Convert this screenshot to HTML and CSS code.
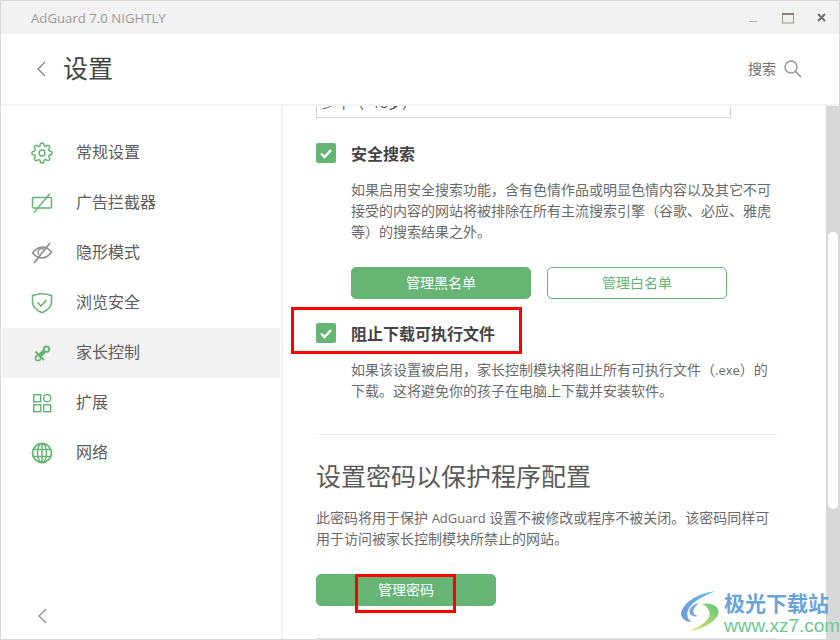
FILE: index.html
```html
<!DOCTYPE html>
<html lang="zh-CN">
<head>
<meta charset="utf-8">
<title>AdGuard 设置</title>
<link rel="stylesheet" href="styles.css">
</head>
<body>
<div class="window">
  <div class="titlebar">
    <span class="app-name">AdGuard 7.0 NIGHTLY</span>
    <div class="win-controls">
      <svg class="win-icon" width="14" height="14" viewBox="0 0 14 14"><path d="M2 10.500h8" stroke="#b5b5b5" stroke-width="1"/></svg>
      <svg class="win-icon" width="14" height="14" viewBox="0 0 14 14"><rect x="1.500" y="2.500" width="11" height="9.500" fill="none" stroke="#9a9484" stroke-width="1"/><path d="M1 3h12" stroke="#8a8474" stroke-width="2"/></svg>
      <svg class="win-icon" width="14" height="14" viewBox="0 0 14 14"><path d="M3 3l7 7M10 3l-7 7" stroke="#707070" stroke-width="2"/></svg>
    </div>
  </div>
  <header class="header">
    <svg class="back-icon" width="12" height="18" viewBox="0 0 12 18"><path d="M10 2L3 9l7 7" fill="none" stroke="#808080" stroke-width="1.200"/></svg>
    <h1 class="page-title">设置</h1>
    <div class="search">
      <span class="search-label">搜索</span>
      <svg width="20" height="20" viewBox="0 0 20 20"><circle cx="8" cy="8" r="6" fill="none" stroke="#979797" stroke-width="1.500"/><path d="M12.500 12.500l5.500 5.500" stroke="#979797" stroke-width="1.700"/></svg>
    </div>
  </header>
  <div class="main">
    <aside class="sidebar">
      <nav class="nav">
        <a class="nav-item">
          <svg class="nav-icon" width="22" height="22" viewBox="0 0 24 24" fill="none" stroke="#66b574" stroke-width="1.600"><circle cx="12" cy="12" r="3.200"/><path d="M19.400 15a1.650 1.650 0 0 0 .33 1.820l.06.06a2 2 0 0 1 0 2.830 2 2 0 0 1-2.830 0l-.06-.06a1.650 1.650 0 0 0-1.820-.33 1.650 1.650 0 0 0-1 1.510V21a2 2 0 0 1-2 2 2 2 0 0 1-2-2v-.09A1.650 1.650 0 0 0 9 19.400a1.650 1.650 0 0 0-1.820.33l-.06.06a2 2 0 0 1-2.830 0 2 2 0 0 1 0-2.830l.06-.06a1.650 1.650 0 0 0 .33-1.820 1.650 1.650 0 0 0-1.510-1H3a2 2 0 0 1-2-2 2 2 0 0 1 2-2h.09A1.650 1.650 0 0 0 4.600 9a1.650 1.650 0 0 0-.33-1.820l-.06-.06a2 2 0 0 1 0-2.830 2 2 0 0 1 2.830 0l.06.06a1.650 1.650 0 0 0 1.820.33H9a1.650 1.650 0 0 0 1-1.510V3a2 2 0 0 1 2-2 2 2 0 0 1 2 2v.09a1.650 1.650 0 0 0 1 1.510 1.650 1.650 0 0 0 1.820-.33l.06-.06a2 2 0 0 1 2.830 0 2 2 0 0 1 0 2.830l-.06.06a1.650 1.650 0 0 0-.33 1.820V9a1.650 1.650 0 0 0 1.510 1H21a2 2 0 0 1 2 2 2 2 0 0 1-2 2h-.09a1.650 1.650 0 0 0-1.510 1z"/></svg>
          <span class="nav-label">常规设置</span>
        </a>
        <a class="nav-item">
          <svg class="nav-icon" width="22" height="22" viewBox="0 0 22 22" fill="none" stroke="#66b574" stroke-width="1.500"><rect x="1.500" y="5.500" width="19" height="10.500" rx="1"/><path d="M3 20.500L19 1.500"/></svg>
          <span class="nav-label">广告拦截器</span>
        </a>
        <a class="nav-item">
          <svg class="nav-icon" width="22" height="22" viewBox="0 0 22 22" fill="none" stroke="#8e8e8e" stroke-width="1.500"><path d="M1.500 11C5 6.500 8 5 11.500 5S17.500 6.500 20.500 10C17.500 14.500 14.500 16 11 16S4.500 14.500 1.500 11z"/><path d="M8 12.500A3.500 3.500 0 0 1 13 7.500"/><path d="M3 21L19 1" stroke-width="1.700"/></svg>
          <span class="nav-label">隐形模式</span>
        </a>
        <a class="nav-item">
          <svg class="nav-icon" width="22" height="22" viewBox="0 0 22 22" fill="none" stroke="#66b574" stroke-width="1.600"><path d="M1.500 3.500C5 2.300 8 1.800 11 1.800S17 2.300 20.500 3.500V10C20.500 15 15.500 18.800 11 20.800 6.500 18.800 1.500 15 1.500 10z"/><path d="M6.500 10.500L10 14l5.500-6"/></svg>
          <span class="nav-label">浏览安全</span>
        </a>
        <a class="nav-item nav-item-active">
          <svg class="nav-icon" width="22" height="22" viewBox="0 0 22 22" fill="none" stroke="#66b574"><circle cx="15.500" cy="7.200" r="2.700" stroke-width="1.800"/><path d="M6.500 16l7-7" stroke-width="4.500"/><path d="M4.500 9.500l8.500 8.500" stroke-width="2"/><circle cx="7" cy="16" r="2.600" stroke-width="1.500" fill="#f2f2f2"/></svg>
          <span class="nav-label">家长控制</span>
        </a>
        <a class="nav-item">
          <svg class="nav-icon" width="22" height="22" viewBox="0 0 22 22" fill="none" stroke="#66b574" stroke-width="1.500"><rect x="2.700" y="2.700" width="7" height="7"/><circle cx="16.200" cy="6.200" r="3.600"/><rect x="2.700" y="12.700" width="7" height="7"/><rect x="12.700" y="12.700" width="7" height="7"/></svg>
          <span class="nav-label">扩展</span>
        </a>
        <a class="nav-item">
          <svg class="nav-icon" width="22" height="22" viewBox="0 0 22 22" fill="none" stroke="#66b574" stroke-width="1.500"><circle cx="11" cy="11" r="9.500" stroke-width="1.800"/><ellipse cx="11" cy="11" rx="4.500" ry="9.500"/><path d="M11 1.500v19M2 7.500h18M2 14.500h18"/></svg>
          <span class="nav-label">网络</span>
        </a>
      </nav>
      <svg class="collapse-icon" width="12" height="18" viewBox="0 0 12 18"><path d="M10 2L3 9l7 7" fill="none" stroke="#8a8a8a" stroke-width="1.300"/></svg>
    </aside>
    <main class="panel">
      <div class="scroll-content">
        <div class="select-box">少年（&lt;18岁）</div>
        <div class="option-row">
          <span class="checkbox"><svg width="20" height="20" viewBox="0 0 20 20"><path d="M5 10.500l3.500 3.500L15 7" fill="none" stroke="#fff" stroke-width="2.400"/></svg></span>
          <span class="option-title">安全搜索</span>
        </div>
        <p class="option-desc">如果启用安全搜索功能，含有色情作品或明显色情内容以及其它不可接受的内容的网站将被排除在所有主流搜索引擎（谷歌、必应、雅虎等）的搜索结果之外。</p>
        <div class="button-row">
          <button class="btn btn-solid">管理黑名单</button>
          <button class="btn btn-outline">管理白名单</button>
        </div>
        <div class="option-row option-row-marked">
          <span class="checkbox"><svg width="20" height="20" viewBox="0 0 20 20"><path d="M5 10.500l3.500 3.500L15 7" fill="none" stroke="#fff" stroke-width="2.400"/></svg></span>
          <span class="option-title">阻止下载可执行文件</span>
        </div>
        <p class="option-desc">如果该设置被启用，家长控制模块将阻止所有可执行文件（<span class="latin-small">.exe</span>）的下载。这将避免你的孩子在电脑上下载并安装软件。</p>
        <hr class="divider divider-first">
        <h2 class="section-title">设置密码以保护程序配置</h2>
        <p class="section-desc">此密码将用于保护 <span class="latin-small">AdGuard</span> 设置不被修改或程序不被关闭。该密码同样可用于访问被家长控制模块所禁止的网站。</p>
        <button class="btn btn-solid btn-marked">管理密码</button>
        <hr class="divider">
      </div>
    </main>
    <div class="scrollbar"><div class="scrollbar-thumb"></div></div>
  </div>
  <div class="watermark">
    <svg width="45" height="42" viewBox="0 0 44 42">
      <defs>
        <linearGradient id="wmBlue" x1="0" y1="0" x2="1" y2="0"><stop offset="0" stop-color="#6a9fdc"/><stop offset="1" stop-color="#5cc0ee"/></linearGradient>
        <linearGradient id="wmGreen" x1="0" y1="1" x2="1" y2="0"><stop offset="0" stop-color="#e6e46a"/><stop offset="1" stop-color="#5cc878"/></linearGradient>
      </defs>
      <path d="M36 1C22 3 7 9 2 21c-2 6 3 11 10 11C7 28 6 22 11 16 17 9 27 5 36 1z" fill="url(#wmBlue)"/>
      <path d="M20 13c-6 1-11 5-10 10 1 3 5 4 8 3-3-1-5-3-4-6 1-3 3-5 6-7z" fill="#7aa7d8"/>
      <path d="M22 14c8-2 16 1 17 7 1 8-13 18-29 20 10-4 21-11 20-18-1-5-4-8-8-9z" fill="url(#wmGreen)"/>
    </svg>
    <div class="wm-text">
      <span class="wm-name">极光下载站</span>
      <span class="wm-url">www.xz7.com</span>
    </div>
  </div>
</div>
</body>
</html>
```
FILE: styles.css
```css
*, *::before, *::after { box-sizing: border-box; }
html, body { margin: 0; padding: 0; }
body {
  width: 840px;
  height: 640px;
  overflow: hidden;
  font-family: "Open Sans", "Noto Sans CJK SC", sans-serif;
  color: #666;
  background: #fff;
}
.window {
  position: relative;
  width: 840px;
  height: 640px;
  border: 1px solid #d8d8d8;
  display: flex;
  flex-direction: column;
  overflow: hidden;
}
.titlebar {
  height: 33px;
  flex: none;
  background: #f2f2f2;
  display: flex;
  align-items: center;
  justify-content: space-between;
  padding: 0 10px 0 30px;
}
.app-name { font-size: 13.2px; color: #9a9a9a; padding-top: 1px; }
.win-controls { display: flex; gap: 20px; align-items: center; }
.win-icon { display: block; }
.header {
  height: 72px;
  flex: none;
  border-bottom: 2px solid #f3f3f3;
  display: flex;
  align-items: center;
  padding: 0 36px 0 34px;
}
.back-icon { flex: none; margin-right: 16px; }
.page-title {
  margin: 0 0 2px;
  font-size: 25px;
  font-weight: 400;
  color: #444;
  line-height: 36px;
}
.search { margin-left: auto; display: flex; align-items: center; gap: 7px; }
.search-label { font-size: 14px; color: #707070; margin-bottom: 2px; }
.main { flex: 1; display: flex; min-height: 0; }
.sidebar {
  width: 282px;
  flex: none;
  border-right: 2px solid #f3f3f3;
  display: flex;
  flex-direction: column;
  padding: 22px 1px 14px 1px;
}
.nav { display: flex; flex-direction: column; }
.nav-item {
  height: 50px;
  display: flex;
  align-items: center;
  padding-left: 29px;
  gap: 23px;
  font-size: 16px;
  color: #5c5c5c;
}
.nav-label { margin-bottom: 4px; }
.nav-item-active { background: #f2f2f2; }
.nav-icon { flex: none; }
.collapse-icon { margin-top: auto; margin-left: 34px; }
.panel { flex: 1; min-width: 0; overflow: hidden; padding: 0 49px 0 33px; }
.scroll-content { margin-top: -28px; }
.select-box {
  width: 415px;
  height: 40px;
  border: 1px solid #d5d5d5;
  padding: 14px 0 0 5px;
  font-size: 14px;
  line-height: 20px;
  color: #555;
  margin-bottom: 25px;
}
.option-row { display: flex; align-items: center; height: 20px; gap: 15px; position: relative; }
.option-row-marked::after {
  content: "";
  position: absolute;
  left: -25px;
  top: -16px;
  width: 231px;
  height: 47px;
  border: 3px solid #f00;
}
.checkbox {
  width: 20px;
  height: 20px;
  flex: none;
  background: #66b574;
  border-radius: 2px;
  display: block;
}
.checkbox svg { display: block; }
.option-title { font-size: 16px; font-weight: 700; color: #444; line-height: 20px; padding-top: 2px; }
.option-desc {
  margin: 16px 0 0 35px;
  font-size: 14px;
  line-height: 21px;
  color: #6a6a6a;
}
.latin-small { font-size: 13px; line-height: 1; }
.button-row { display: flex; gap: 16px; margin: 25px 0 24px 35px; }
.btn {
  display: block;
  width: 180px;
  height: 32px;
  padding: 0;
  border-radius: 5px;
  font: inherit;
  font-size: 14px;
  line-height: 30px;
}
.btn-solid { background: #66b574; border: 1px solid #66b574; color: #fff; }
.btn-outline { background: #fff; border: 1px solid #66b574; color: #66b574; }
.btn-marked { position: relative; }
.btn-marked::after {
  content: "";
  position: absolute;
  left: 38px;
  top: -1px;
  width: 101px;
  height: 39px;
  border: 3px solid #f00;
}
.divider { margin: 0; border: 0; border-top: 1px solid #ececec; }
.divider-first { margin-top: 33px; }
.section-title {
  margin: 23px 0 13px;
  font-size: 25px;
  line-height: 36px;
  font-weight: 400;
  color: #5a5a5a;
}
.section-desc { margin: 0 0 25px; font-size: 14px; line-height: 21px; color: #6a6a6a; }
.btn-marked + .divider { margin-top: 32px; border-top-color: #e4e4e4; }
.scrollbar { width: 13px; flex: none; background: #d8d8d8; padding: 126px 1px 0 2px; }
.scrollbar-thumb { height: 277px; background: #fff; border-radius: 5px; }
.watermark {
  position: absolute;
  left: 678px;
  top: 589px;
  display: flex;
  align-items: flex-start;
}
.wm-text { display: flex; flex-direction: column; padding-top: 1px; }
.wm-name { font-size: 21px; line-height: 24px; font-weight: 700; color: #6aa3da; white-space: nowrap; }
.wm-url { font-family: "Liberation Sans", sans-serif; font-size: 19px; line-height: 20px; margin-top: 1px; color: #6cc88e; white-space: nowrap; }
```
